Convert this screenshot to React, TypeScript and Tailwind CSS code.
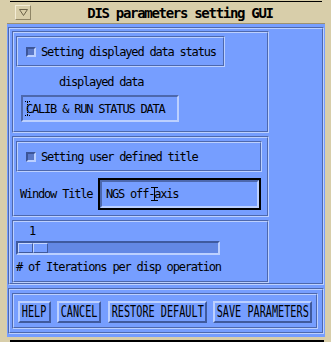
import React from "react";

// Motif-ish palette
const mono =
  "font-['DejaVu_Sans_Mono',monospace] text-[12px] tracking-[-1.2px] leading-[12px] text-black whitespace-nowrap";

function Etched({
  className = "",
  children,
}: {
  className?: string;
  children?: React.ReactNode;
}) {
  return (
    <div
      className={`border border-t-[#4d68ad] border-l-[#4d68ad] border-b-[#bcd0ff] border-r-[#bcd0ff] ${className}`}
    >
      <div className="h-full border border-t-[#bcd0ff] border-l-[#bcd0ff] border-b-[#4d68ad] border-r-[#4d68ad]">
        {children}
      </div>
    </div>
  );
}

function ToggleFrame({ label, className }: { label: string; className: string }) {
  return (
    <Etched className={`h-[31px] ${className}`}>
      <div className="flex h-full items-center pl-[8px]">
        {/* toggle indicator */}
        <div className="h-[10px] w-[10px] flex-shrink-0 border-2 border-t-[#3c5598] border-l-[#3c5598] border-b-[#bcd0ff] border-r-[#bcd0ff] bg-[#5a78c8]" />
        <span className={`${mono} ml-[5px]`}>{label}</span>
      </div>
    </Etched>
  );
}

function PushButton({ label, className }: { label: string; className: string }) {
  return (
    <div
      className={`flex h-[22px] items-center justify-center border-2 border-t-[#bcd0ff] border-l-[#bcd0ff] border-b-[#3f5a9e] border-r-[#3f5a9e] bg-[#769eff] ${className}`}
    >
      <span className="inline-block scale-x-[0.68] scale-y-[1.05] font-['DejaVu_Sans_Mono',monospace] text-[15px] leading-[15px] text-black whitespace-nowrap">
        {label}
      </span>
    </div>
  );
}

function IBeam({ className }: { className: string }) {
  return (
    <svg className={`absolute ${className}`} width="7" height="14" viewBox="0 0 7 14">
      <path d="M0 0.5H7M0 13.5H7M3.5 0V14" stroke="#000" strokeWidth="1" fill="none" />
    </svg>
  );
}

export default function App() {
  return (
    <div className="w-[331px] h-[342px] bg-[#d8ceaa] overflow-hidden">
      {/* window top edge */}
      <div className="h-[1px]" />
      <div className="ml-[10px] mr-[9px] h-[1px] bg-black" />
      <div className="h-[1px]" />

      {/* title bar */}
      <div className="flex h-[20px]">
        <div className="ml-[15px] mt-[2px] flex h-[15px] w-[16px] items-center justify-center border border-t-[#f3ecd6] border-l-[#f3ecd6] border-b-[#8f8566] border-r-[#8f8566]">
          <svg width="9" height="7" viewBox="0 0 9 7">
            <path d="M0.5 0.5H8.5L4.5 6.5Z" stroke="#6b6249" fill="none" strokeWidth="1" />
          </svg>
        </div>
        <div className="flex flex-1 items-center justify-center pr-[2px]">
          <span className="font-['DejaVu_Sans_Mono',monospace] text-[14px] font-bold tracking-[-1.3px] leading-[14px] text-black whitespace-nowrap">
            DIS parameters setting GUI
          </span>
        </div>
      </div>

      {/* client area */}
      <div className="ml-[7px] h-[314px] w-[318px] border-t border-t-[#9c9170] bg-[#769eff] pt-[3px] pl-[1px]">
        <Etched className="h-[258px] w-[316px]">
          <div className="flex flex-col gap-[3px] pl-[2px] pt-[2px]">
            {/* displayed data */}
            <Etched className="h-[102px] w-[257px]">
              <div className="flex flex-col pl-[2px] pt-[3px]">
                <ToggleFrame label="Setting displayed data status" className="w-[209px]" />
                <div className={`${mono} ml-[43px] mt-[9px]`}>displayed data</div>
                <div className="relative ml-[5px] mt-[7px] flex h-[27px] w-[158px] items-center border-2 border-t-[#4d68ad] border-l-[#4d68ad] border-b-[#bcd0ff] border-r-[#bcd0ff] pl-[3px]">
                  <span className={mono}>CALIB &amp; RUN STATUS DATA</span>
                  <svg className="absolute left-[2px] top-[4px]" width="5" height="15" viewBox="0 0 5 15">
                    <path d="M0 0.5H5M0 14.5H5M2.5 1V14" stroke="#000" strokeWidth="1" strokeDasharray="1 1" fill="none" />
                  </svg>
                </div>
              </div>
            </Etched>

            {/* user defined title */}
            <Etched className="h-[81px] w-[257px]">
              <div className="flex flex-col pl-[2px] pt-[3px]">
                <ToggleFrame label="Setting user defined title" className="w-[246px]" />
                <div className="mt-[6px] flex items-center">
                  <span className={`${mono} ml-[4px] w-[78px]`}>Window Title</span>
                  <div className="h-[32px] w-[163px] border-2 border-black">
                    <div className="relative flex h-full items-center border-2 border-t-[#4d68ad] border-l-[#4d68ad] border-b-[#bcd0ff] border-r-[#bcd0ff] pl-[4px]">
                      <span className={mono}>NGS off-axis</span>
                      <IBeam className="left-[49px] top-[5px]" />
                    </div>
                  </div>
                </div>
              </div>
            </Etched>

            {/* iterations scale */}
            <Etched className="h-[63px] w-[257px]">
              <div className="flex flex-col pt-[3px]">
                <span className={`${mono} ml-[15px]`}>1</span>
                <div className="ml-[2px] mt-[4px] flex h-[14px] w-[204px] items-start border-2 border-t-[#3f5a9e] border-l-[#3f5a9e] border-b-[#bcd0ff] border-r-[#bcd0ff] bg-[#6388e4]">
                  <div className="flex h-[10px] w-[30px]">
                    <div className="h-full w-[15px] border border-t-[#c6d7ff] border-l-[#c6d7ff] border-b-[#3f5a9e] border-r-[#3f5a9e] bg-[#769eff]" />
                    <div className="h-full w-[15px] border border-t-[#c6d7ff] border-l-[#c6d7ff] border-b-[#3f5a9e] border-r-[#3f5a9e] bg-[#769eff]" />
                  </div>
                </div>
                <span className={`${mono} ml-[2px] mt-[6px]`}># of Iterations per disp operation</span>
              </div>
            </Etched>
          </div>
        </Etched>

        {/* action area */}
        <Etched className="mt-[3px] h-[46px] w-[316px]">
          <div className="px-[2px] pt-[3px]">
            <Etched className="h-[36px] w-[306px]">
              <div className="flex pl-[4px] pt-[6px]">
                <PushButton label="HELP" className="w-[33px]" />
                <PushButton label="CANCEL" className="ml-[6px] w-[44px]" />
                <PushButton label="RESTORE DEFAULT" className="ml-[7px] w-[99px]" />
                <PushButton label="SAVE PARAMETERS" className="ml-[6px] w-[99px]" />
              </div>
            </Etched>
          </div>
        </Etched>
      </div>

      {/* window bottom edge */}
      <div className="h-[3px]" />
      <div className="ml-[10px] mr-[7px] h-[2px] bg-black" />
    </div>
  );
}
